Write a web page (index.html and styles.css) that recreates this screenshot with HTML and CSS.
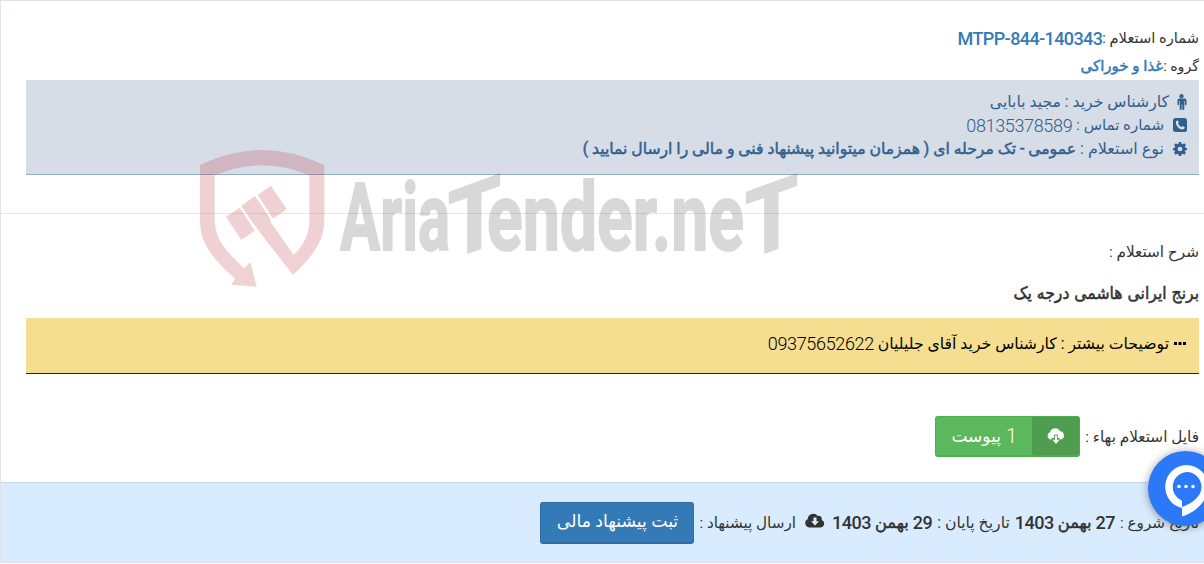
FILE: index.html
```html
<!DOCTYPE html>
<html lang="fa" dir="rtl">
<head>
    <meta charset="UTF-8">
    <meta name="viewport" content="width=device-width, initial-scale=1.0">
    <title>استعلام بهاء</title>
    <link rel="stylesheet" href="styles.css">
</head>
<body>
    <div class="tender">
        <div class="tender-head">
            <div class="line"><span class="label l-num">شماره استعلام :</span><b class="code">MTPP-844-140343</b></div>
            <div class="line line-group"><span class="label">گروه :</span><b class="group">غذا و خوراکی</b></div>
            <div class="info">
                <div class="info-line">
                    <svg width="11" height="16" viewBox="2.500 0 11 16"><circle cx="8" cy="2.200" r="2.100"/><path d="M4.600 4.600h6.800q1.600 0 1.600 1.600v4.200q0 .8-.8.8t-.8-.8V7h-.6v8q0 1-1 1t-1-1v-4.500h-.6V15q0 1-1 1t-1-1V7h-.6v3.400q0 .8-.8.8t-.8-.8V6.200q0-1.600 1.600-1.600z"/></svg>
                    <span class="i-name">کارشناس خرید : مجید بابایی</span>
                </div>
                <div class="info-line wide-icon">
                    <svg width="14" height="14" viewBox="0 0 14 14"><rect width="14" height="14" rx="2.500"/><path class="cut" d="M4.700 2.300L3 3.200C2.300 5 3.300 7.400 5 9.200s4.200 2.900 6 1.900l.9-1.800-2.200-1.300-1.100 1.100C7 8.400 5.700 7 5 5.500l1-1z"/></svg>
                    <span class="i-tel">شماره تماس :</span><span class="num">08135378589</span>
                </div>
                <div class="info-line wide-icon">
                    <svg width="14" height="14" viewBox="0 0 16 16"><path fill-rule="evenodd" d="M6.600 0h2.800l.4 2.200 1.300.5 1.800-1.300 2 2-1.300 1.800.5 1.300 2 .4v2.300l-2.100.4-.5 1.300 1.300 1.800-2 2-1.800-1.300-1.300.5-.4 2.100H6.600l-.4-2.100-1.300-.5-1.800 1.300-2-2 1.300-1.800-.5-1.300L0 9.300V6.900l2-.4.5-1.300-1.300-1.800 2-2L5 2.700l1.300-.5zM8 5.300a2.700 2.700 0 1 0 0 5.400 2.700 2.700 0 0 0 0-5.400z"/></svg>
                    <span class="i-type">نوع استعلام :</span><b class="i-desc">عمومی - تک مرحله ای ( همزمان میتوانید پیشنهاد فنی و مالی را ارسال نمایید )</b>
                </div>
            </div>
        </div>

        <div class="tender-body">
            <div class="line"><span class="label l-about">شرح استعلام :</span></div>
            <h4>برنج ایرانی هاشمی درجه یک</h4>
            <div class="note">
                <svg width="14" height="5" viewBox="0 0 14 5"><path d="M1 1h3v3H1zM5.500 1h3v3h-3zM10 1h3v3h-3z"/></svg>
                <span class="n-text">توضیحات بیشتر : کارشناس خرید آقای جلیلیان</span><span class="num">09375652622</span>
            </div>
            <div class="files">
                <span class="label l-file">فایل استعلام بهاء :</span>
                <a class="btn btn-success">
                    <span class="btn-icon"><svg width="18" height="17" viewBox="0 0 18 17"><path d="M4.500 11.500H4A3.800 3.800 0 0 1 3 4.200 5.300 5.300 0 0 1 13 3.300 4.200 4.200 0 0 1 14 11.500h-1.500V10h-1.700V6.500H7.200V10H4.500z"/><path d="M8 7.500h2v4.200h2.500L9 16l-3.500-4.300H8z"/></svg></span>
                    <span class="btn-text"><span class="one">1</span><span>پیوست</span></span>
                </a>
            </div>
        </div>

        <div class="tender-foot">
            <span class="label">تاریخ شروع :</span>
            <b class="date"><span>27</span><span class="month">بهمن</span><span>1403</span></b>
            <span class="label d-end">تاریخ پایان :</span>
            <b class="date"><span>29</span><span class="month">بهمن</span><span>1403</span></b>
            <svg class="cloud" width="20" height="15" viewBox="0 0 20 15"><path fill-rule="evenodd" d="M4.600 14.500A4.500 4.500 0 0 1 2.700 6 5.600 5.600 0 0 1 12.800 3a3.200 3.200 0 0 1 3.900 4 3.900 3.900 0 0 1-.9 7.500zM8.500 4.500v3.800H6l4 4.200 4-4.200h-2.500V4.500z"/></svg>
            <span class="label">ارسال پیشنهاد :</span>
            <a class="btn btn-primary">ثبت پیشنهاد مالی</a>
        </div>
    </div>

    <svg class="watermark" width="610" height="150" viewBox="195 145 610 150" direction="ltr">
        <g class="shield">
            <path d="M200 165Q262 135 324.300 165V221C324.300 242 311 258 293 275L257.700 229.500L241 206L255 196L270.700 219.500V222L293.500 255C304 245 309.500 234 309.500 219V175.500Q262 155 214.700 175.500V219C214.700 240 227 252 244.300 268.300L250.300 262L256.700 286.700L231 284.700L235.300 279C214 260 200 244 200 221z"/>
            <path d="M226 216.700L239.700 207.700L254.700 230.700L241.300 240zM257.700 194.700L271 186L286.700 209.300L273 218.700z"/>
        </g>
        <g class="brand">
            <text x="340" y="250" textLength="110" lengthAdjust="spacingAndGlyphs">Aria</text>
            <text transform="translate(448 260) skewY(-20)" textLength="53" lengthAdjust="spacingAndGlyphs">T</text>
            <text x="487" y="250" textLength="257" lengthAdjust="spacingAndGlyphs">ender.ne</text>
            <text transform="translate(745 260) skewY(-20)" textLength="53" lengthAdjust="spacingAndGlyphs">T</text>
        </g>
    </svg>

    <div class="chat">
        <svg width="44" height="54" viewBox="0 0 44 54"><path fill-rule="evenodd" d="M22.500 0A21.500 21.500 0 0 1 44 21.500C44 36 32 47 18 51.500V43A21.800 21.800 0 0 1 22.500 0zm0 7A15 15 0 0 0 18 35.800V42c10-3.500 19.500-10.500 19.500-20A15 15 0 0 0 22.500 7z"/><circle cx="15" cy="21.500" r="1.800"/><circle cx="22" cy="21.500" r="1.800"/><circle cx="29" cy="21.500" r="1.800"/></svg>
    </div>
</body>
</html>
```
FILE: styles.css
```css
* {
    box-sizing: border-box;
}

body {
    font-family: Roboto, "DejaVu Sans", sans-serif;
    font-size: 14.2px;
    color: #333;
    background-color: #fff;
    margin: 0;
    height: 564px;
    overflow: hidden;
    position: relative;
}

.tender {
    height: 563px;
    border: 1px solid #dfe2e7;
    border-right: none;
}

.tender-head {
    height: 213px;
    padding: 23px 5px 0 25px;
    border-bottom: 1px solid #e7e7e7;
}

.line {
    display: flex;
    align-items: center;
    height: 28px;
    white-space: nowrap;
}

.line-group {
    height: 27px;
    margin-bottom: 1px;
}

.l-num {
    font-size: 14.7px;
}

.code,
.group {
    color: #337ab7;
}

.code {
    font-size: 18px;
    font-weight: 500;
    letter-spacing: -0.6px;
}

/* the bold weight is too wide for the longer texts */
.group,
.i-desc,
.month,
h4 {
    font-weight: 400;
    -webkit-text-stroke: 0.5px currentColor;
}

.group {
    font-size: 15px;
}

.info {
    height: 95px;
    padding: 10px 12px 0;
    color: #31608f;
    fill: #31608f;
    background-color: #d6dde7;
    border-bottom: 1px solid #93adc4;
}

.info-line {
    display: flex;
    align-items: center;
    gap: 7px;
    height: 23.5px;
    white-space: nowrap;
}

.wide-icon {
    gap: 4px;
}

.wide-icon svg {
    margin-left: 5px;
}

.cut {
    fill: #d6dde7;
}

.i-name,
.n-text {
    font-size: 15.7px;
}

.i-tel {
    font-size: 15px;
}

.i-type {
    font-size: 16px;
}

.i-desc {
    font-size: 15.65px;
}

.num {
    font-size: 18px;
    font-weight: 300;
    letter-spacing: -0.35px;
}

.tender-body {
    height: 268px;
    padding: 24px 5px 0 25px;
}

.l-about,
.l-file {
    font-size: 15.3px;
}

h4 {
    margin: 0;
    height: 52px;
    line-height: 54px;
    font-family: "DejaVu Sans Condensed", "DejaVu Sans", sans-serif;
    font-stretch: condensed;
    font-size: 17.4px;
}

.note {
    display: flex;
    align-items: center;
    gap: 4px;
    height: 56px;
    padding: 0 12px 4px;
    color: #000;
    background-color: #f6de91;
    border-bottom: 1px solid #222;
}

.files {
    display: flex;
    align-items: center;
    gap: 5px;
    margin-top: 42px;
    height: 41px;
}

.btn {
    display: flex;
    align-items: center;
    justify-content: center;
    color: #fff;
    fill: #fff;
    border-radius: 3px;
    white-space: nowrap;
}

.btn-success {
    width: 145px;
    height: 41px;
    background-color: #5cb85c;
    border: 1px solid #4cae4c;
    border-bottom-width: 2px;
    font-size: 17px;
}

.btn-icon {
    display: flex;
    align-items: center;
    justify-content: center;
    width: 47px;
    height: 100%;
    border-radius: 0 0 3px 3px;
    background-color: #4f9e4f;
}

.btn-text {
    display: flex;
    align-items: center;
    justify-content: center;
    gap: 5px;
    flex: 1;
}

.one {
    font-size: 20px;
    font-weight: 300;
}

.tender-foot {
    display: flex;
    align-items: center;
    gap: 5px;
    height: 80px;
    padding-right: 5px;
    font-size: 15.2px;
    white-space: nowrap;
    background-color: #d9ecff;
    border-top: 1px solid #c5d6e8;
}

.d-end {
    font-size: 15.7px;
}

.date {
    display: flex;
    align-items: center;
    gap: 4px;
    font-size: 18px;
    font-weight: 500;
    letter-spacing: -0.5px;
}

.month {
    font-size: 16.3px;
    letter-spacing: 0;
}

.cloud {
    margin: 0 2px 5px 4px;
    fill: #333;
}

.btn-primary {
    width: 154px;
    height: 42px;
    padding-bottom: 2px;
    background-color: #337ab7;
    border: 1px solid #2e6da4;
    border-bottom-width: 2px;
    font-size: 17.3px;
}

.watermark {
    position: absolute;
    left: 195px;
    top: 145px;
    overflow: visible;
}

.shield {
    fill: #b72a34;
    opacity: 0.21;
}

.brand {
    font-family: Roboto, sans-serif;
    font-size: 94px;
    font-weight: 700;
    fill: #000;
    stroke: #000;
    stroke-width: 2px;
    stroke-linejoin: round;
    opacity: 0.15;
}

.chat {
    position: absolute;
    left: 1148px;
    top: 451px;
    width: 75px;
    height: 75px;
    padding: 14px 15px;
    border-radius: 50%;
    background-color: #2b79f8;
    box-shadow: 0 1px 10px rgba(0, 0, 0, 0.4);
    fill: #fff;
}
```
